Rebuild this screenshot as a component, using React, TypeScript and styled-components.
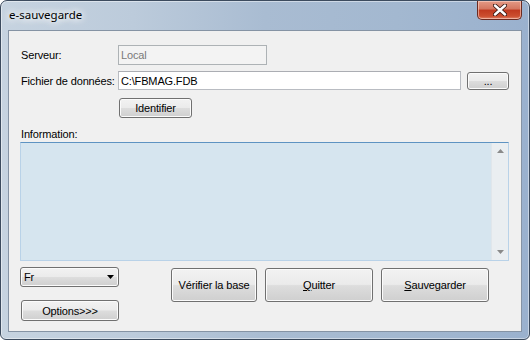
import React from "react";
import styled, { createGlobalStyle } from "styled-components";

const Global = createGlobalStyle`
  html, body { margin: 0; padding: 0; background: #ffffff; }
  * { box-sizing: border-box; }
`;

const Window = styled.div`
  width: 530px;
  height: 340px;
  border: 1px solid #3c4b5e;
  border-radius: 7px 7px 6px 6px;
  background: linear-gradient(90deg, #c6d3e0 0%, #bccbdb 25%, #a9bcd2 50%, #a3b8d0 75%, #9ab1ce 100%);
  box-shadow: inset 0 0 0 1px rgba(255, 255, 255, 0.45);
  padding: 0 7px 7px 7px;
  display: flex;
  flex-direction: column;
  overflow: hidden;
  font-family: "Liberation Sans", Arial, sans-serif;
  letter-spacing: -0.15px;
`;

const TitleBar = styled.div`
  height: 29px;
  margin: 0 -7px;
  padding: 0 7px 0 8px;
  display: flex;
  justify-content: space-between;
  align-items: flex-start;
`;

const Title = styled.div`
  margin-top: 5px;
  font-family: "Noto Sans", "Segoe UI", sans-serif;
  font-size: 11.5px;
  line-height: 18px;
  letter-spacing: 0;
  color: #000;
  padding: 0 6px 0 0;
  text-shadow: 0 0 6px #ffffff, 0 0 9px #ffffff, 0 0 12px rgba(255,255,255,0.9);
`;

const CloseBtn = styled.div`
  width: 45px;
  height: 19px;
  border: 1px solid #6b2a20;
  border-top: none;
  border-radius: 0 0 5px 5px;
  background: linear-gradient(#e49a86 0%, #d4765f 45%, #c0391f 50%, #cc4f30 85%, #e0846a 100%);
  box-shadow: inset 0 0 0 1px rgba(255, 220, 210, 0.55);
  display: flex;
  align-items: center;
  justify-content: center;
`;

const Client = styled.div`
  flex: 1;
  background: #f0f0f0;
  border: 1px solid #8593a4;
  padding: 14px 0 0 11px;
  display: flex;
  flex-direction: column;
`;

const Row = styled.div<{ $mt: number; $h: number }>`
  display: flex;
  align-items: center;
  margin-top: ${(p) => p.$mt}px;
  height: ${(p) => p.$h}px;
`;

const Label = styled.div`
  width: 98px;
  padding-left: 1px;
  font-size: 11px;
  color: #000;
  white-space: nowrap;
`;

const TextBox = styled.div<{ $w: number; $disabled?: boolean }>`
  width: ${(p) => p.$w}px;
  height: 100%;
  border: 1px solid ${(p) => (p.$disabled ? "#adb2b5" : "#b9bcc2")};
  border-top-color: ${(p) => (p.$disabled ? "#adb2b5" : "#abadb3")};
  background: ${(p) => (p.$disabled ? "#f3f3f3" : "#ffffff")};
  color: ${(p) => (p.$disabled ? "#7a7a7a" : "#000")};
  font-size: 11px;
  display: flex;
  align-items: center;
  padding-left: 2px;
`;

const Btn = styled.div<{ $w: number; $h: number; $ml?: number; $mt?: number }>`
  width: ${(p) => p.$w}px;
  height: ${(p) => p.$h}px;
  margin-left: ${(p) => p.$ml ?? 0}px;
  margin-top: ${(p) => p.$mt ?? 0}px;
  flex: none;
  border: 1px solid #707070;
  border-radius: 3px;
  background: linear-gradient(#f2f2f2 0%, #ebebeb 48%, #dddddd 52%, #cfcfcf 100%);
  box-shadow: inset 0 0 0 1px #fbfbfb;
  font-size: 11px;
  color: #000;
  display: flex;
  align-items: center;
  justify-content: center;
  white-space: nowrap;
`;

const U = styled.span`
  text-decoration: underline;
`;

const InfoLabel = styled.div`
  margin-top: 10px;
  padding-left: 1px;
  height: 13px;
  line-height: 13px;
  font-size: 11px;
  color: #000;
`;

const InfoBox = styled.div`
  margin-top: 1px;
  width: 489px;
  height: 119px;
  border: 1px solid #b9d2e8;
  border-top-color: #5e93c2;
  background: #d6e5ef;
  display: flex;
  justify-content: flex-end;
`;

const ScrollBar = styled.div`
  width: 17px;
  height: 100%;
  background: #eaeef1;
  border-left: 1px solid #e0e6eb;
  display: flex;
  flex-direction: column;
  justify-content: space-between;
  align-items: center;
  padding: 6px 0 6px 0;
`;

const Bottom = styled.div`
  margin-top: 6px;
  display: flex;
  align-items: flex-start;
`;

const LeftCol = styled.div`
  width: 99px;
  display: flex;
  flex-direction: column;
`;

const Combo = styled.div`
  width: 99px;
  height: 20px;
  border: 1px solid #707070;
  border-radius: 3px;
  background: linear-gradient(#f2f2f2 0%, #ebebeb 48%, #dddddd 52%, #cfcfcf 100%);
  box-shadow: inset 0 0 0 1px #fbfbfb;
  font-size: 11px;
  display: flex;
  align-items: center;
  justify-content: space-between;
  padding: 0 4px 0 3px;
`;

const Actions = styled.div`
  margin-top: 1px;
  margin-left: 52px;
  display: flex;
  gap: 8px;
`;

const Arrow = ({ up }: { up?: boolean }) => (
  <svg width="7" height="4" viewBox="0 0 7 4">
    <polygon points={up ? "0,4 7,4 3.5,0" : "0,0 7,0 3.5,4"} fill="#8a8a8a" />
  </svg>
);

export default function App() {
  return (
    <>
      <Global />
      <Window>
        <TitleBar>
          <Title>e-sauvegarde</Title>
          <CloseBtn>
            <svg width="14" height="12" viewBox="0 0 14 12">
              <path
                d="M2 1.5 L12 10.5 M12 1.5 L2 10.5"
                stroke="#3a1a14"
                strokeWidth="4.2"
                strokeLinecap="round"
              />
              <path
                d="M2 1.5 L12 10.5 M12 1.5 L2 10.5"
                stroke="#ffffff"
                strokeWidth="2.4"
                strokeLinecap="round"
              />
            </svg>
          </CloseBtn>
        </TitleBar>
        <Client>
          <Row $mt={0} $h={20}>
            <Label>Serveur:</Label>
            <TextBox $w={149} $disabled>
              Local
            </TextBox>
          </Row>
          <Row $mt={6} $h={19}>
            <Label>Fichier de données:</Label>
            <TextBox $w={343}>C:\FBMAG.FDB</TextBox>
            <Btn $w={42} $h={18} $ml={6}>
              ...
            </Btn>
          </Row>
          <Row $mt={8} $h={20}>
            <Btn $w={73} $h={20} $ml={99}>
              Identifier
            </Btn>
          </Row>
          <InfoLabel>Information:</InfoLabel>
          <InfoBox>
            <ScrollBar>
              <Arrow up />
              <Arrow />
            </ScrollBar>
          </InfoBox>
          <Bottom>
            <LeftCol>
              <Combo>
                <span>Fr</span>
                <svg width="7" height="4" viewBox="0 0 7 4">
                  <polygon points="0,0 7,0 3.5,4" fill="#000" />
                </svg>
              </Combo>
              <Btn $w={98} $h={21} $ml={1} $mt={13}>
                Options&gt;&gt;&gt;
              </Btn>
            </LeftCol>
            <Actions>
              <Btn $w={86} $h={34}>
                Vérifier la base
              </Btn>
              <Btn $w={108} $h={34}>
                <U>Q</U>uitter
              </Btn>
              <Btn $w={108} $h={34}>
                <U>S</U>auvegarder
              </Btn>
            </Actions>
          </Bottom>
        </Client>
      </Window>
    </>
  );
}
